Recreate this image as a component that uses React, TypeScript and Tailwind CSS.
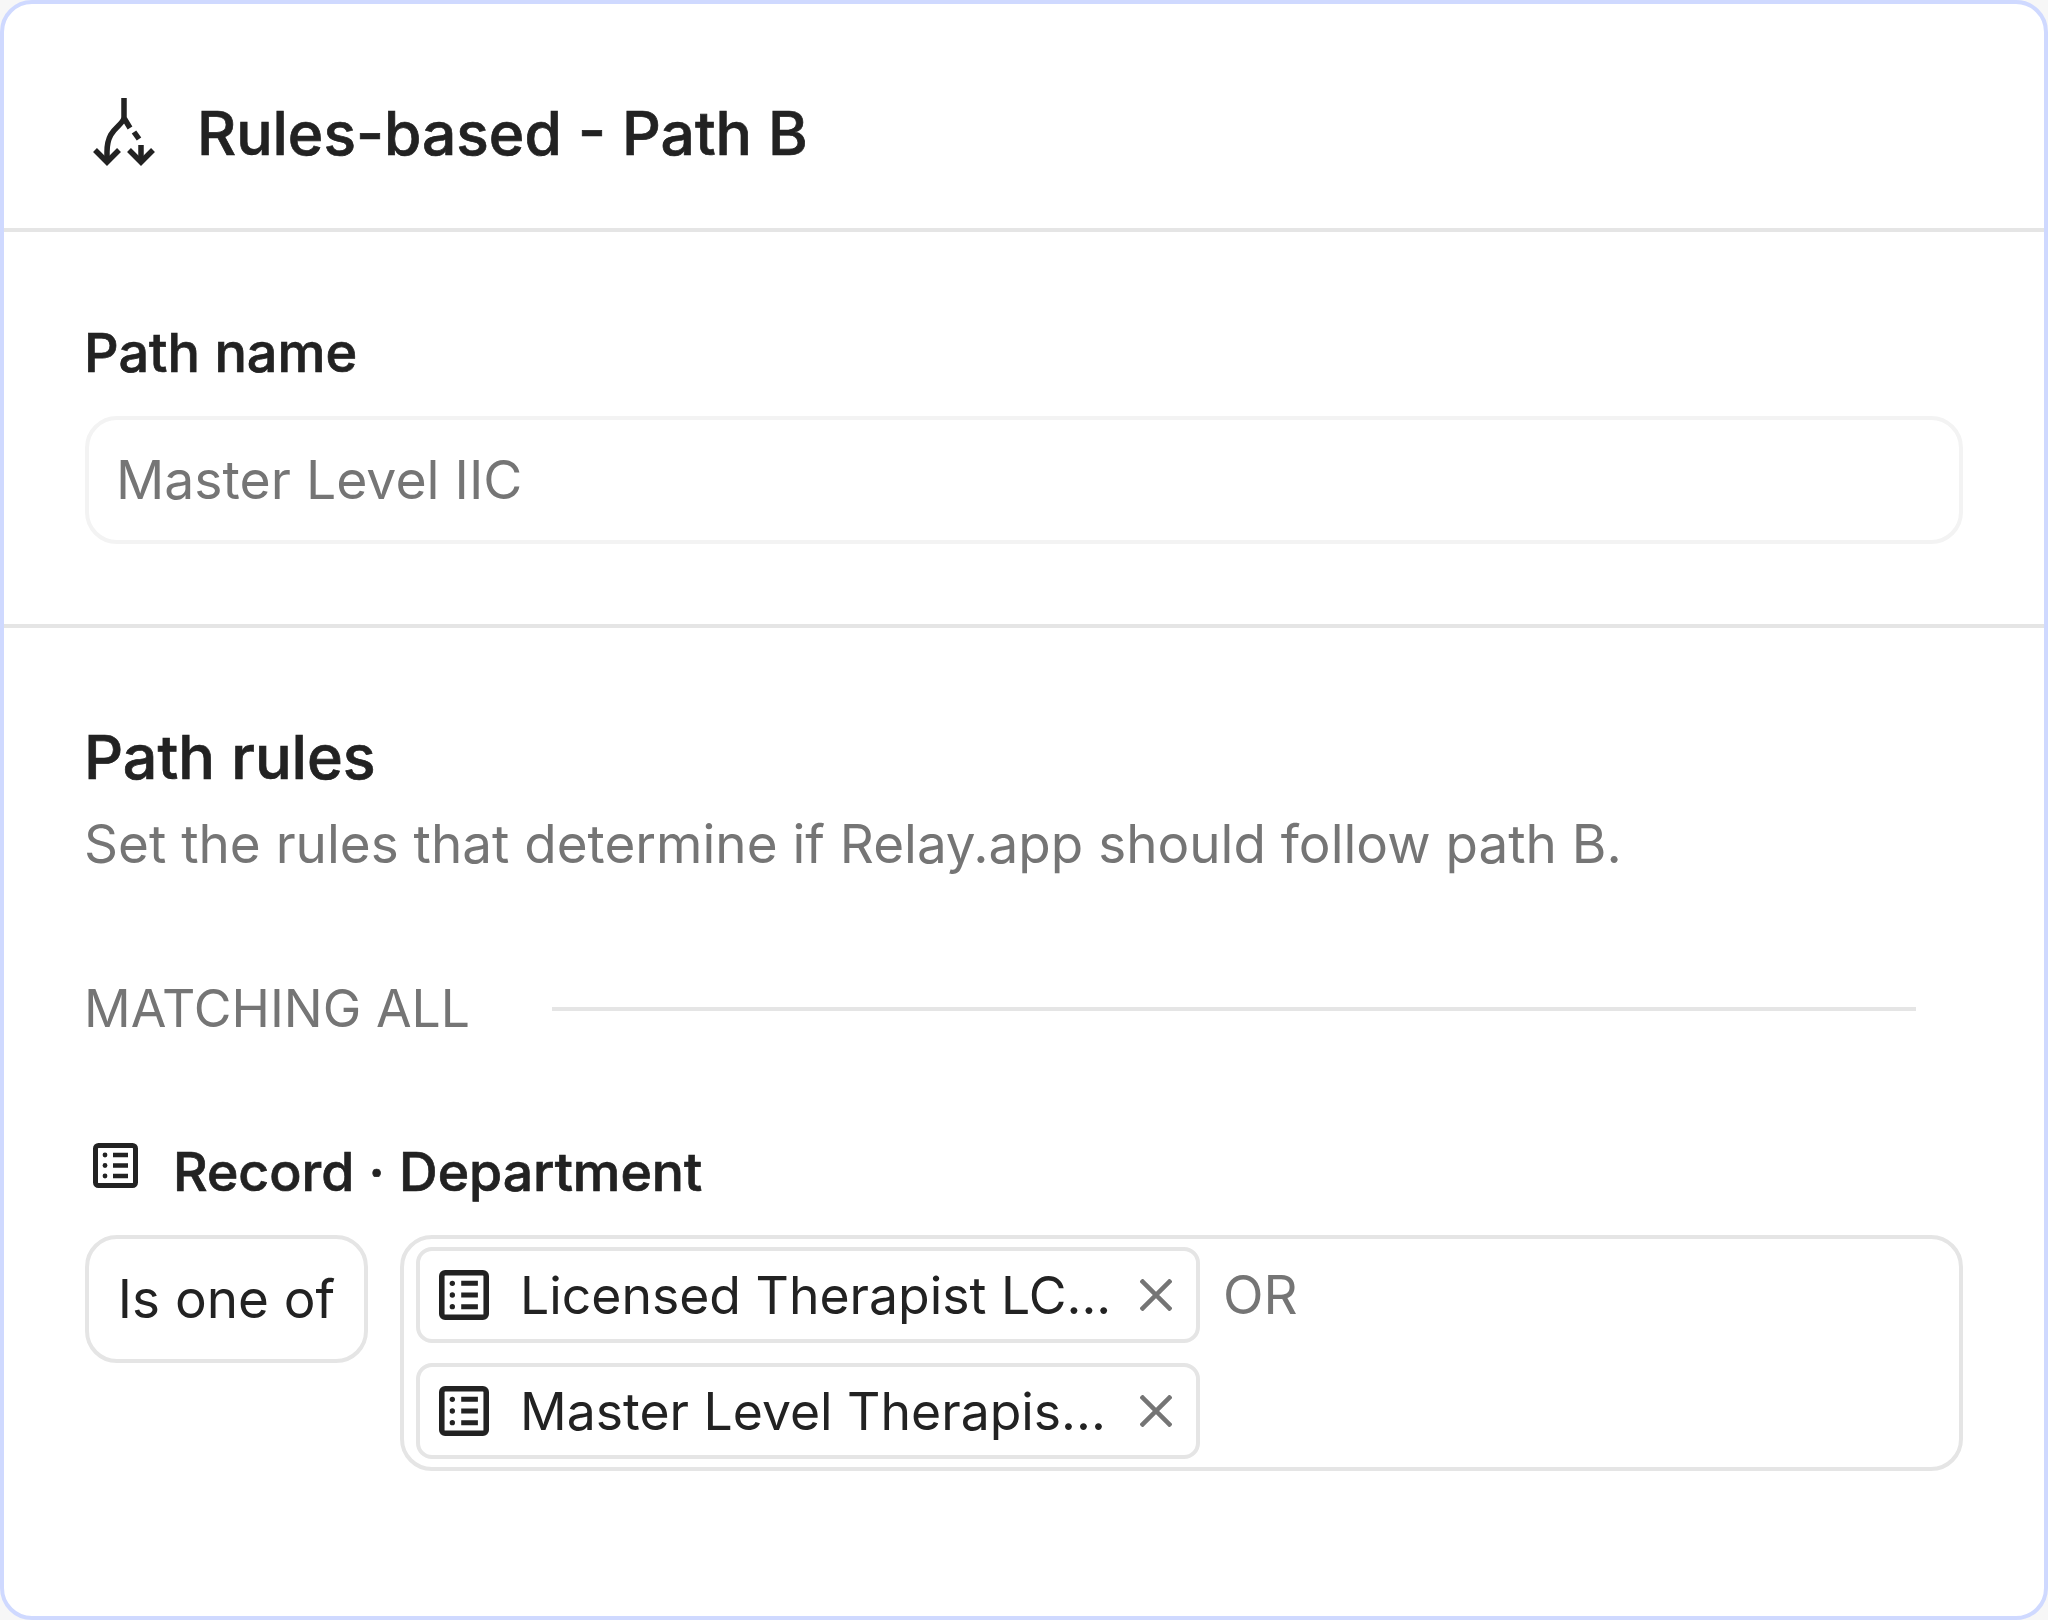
import React from 'react'

const font = "font-['Inter','Liberation_Sans',sans-serif]"
const heavy = 'font-medium text-[#222222] [-webkit-text-stroke:0.7px_#222222]'

const RecordIcon: React.FC<{ className?: string }> = ({ className }) => (
  <svg viewBox="0 0 45 45" className={className} fill="none" stroke="#222222">
    <rect x="2.5" y="2.5" width="40" height="40" rx="3" strokeWidth="5" />
    <path d="M20 12h15M20 22.5h15M20 33h15" strokeWidth="4.5" />
    <circle cx="12" cy="12" r="2.4" fill="#222222" stroke="none" />
    <circle cx="12" cy="22.5" r="2.4" fill="#222222" stroke="none" />
    <circle cx="12" cy="33" r="2.4" fill="#222222" stroke="none" />
  </svg>
)

const BranchIcon: React.FC = () => (
  <svg viewBox="0 0 68 70" className="w-[68px] h-[70px] shrink-0" fill="none" stroke="#222222" strokeWidth="5.5">
    <path d="M34 0v20L40 30" />
    <path d="M34 20c-2 9-17 10-17 34v10" />
    <path d="M5 52l12 12 12-12" />
    <path d="M44 34l5 7" />
    <path d="M51 47v17" />
    <path d="M39 52l12 12 12-12" />
  </svg>
)

const Chip: React.FC<{ label: string }> = ({ label }) => (
  <div className="flex items-center w-[784px] h-[96px] rounded-[16px] border-4 border-[#e5e5e5] pl-[19px]">
    <RecordIcon className="w-[50px] h-[50px] shrink-0" />
    <span className="ml-[31px] pt-[2px] text-[51.7px] text-[#222222] whitespace-nowrap">{label}</span>
    <svg viewBox="0 0 32 32" className="w-8 h-8 ml-auto mr-[24px]" stroke="#757575" strokeWidth="4.5" fill="none">
      <path d="M1 1l30 30M31 1L1 31" />
    </svg>
  </div>
)

export default function App() {
  return (
    <div className={`${font} w-[2048px] h-[1620px] bg-[#f7f7f7]`}>
      <div className="w-full h-full bg-white border-4 border-[#cfd9ff] rounded-[32px]">
        <div className="flex items-center h-[228px] pl-[86px] pt-[34px] border-b-4 border-[#e5e5e5]">
          <BranchIcon />
          <h1 className={`ml-[39px] text-[60.5px] ${heavy}`}>Rules-based - Path B</h1>
        </div>
        <div className="h-[396px] px-[81px] pt-[88px] border-b-4 border-[#e5e5e5]">
          <div className={`-ml-px text-[54px] leading-[65px] ${heavy}`}>Path name</div>
          <div className="mt-[31px] flex items-center h-[128px] rounded-[32px] border-4 border-[#f3f3f3] pl-[27px] text-[53.5px] text-[#757575]">
            Master Level IIC
          </div>
        </div>
        <div className="pl-[81px] pr-[81px] pt-[94px]">
          <div className={`-ml-px text-[61px] leading-[70px] ${heavy}`}>Path rules</div>
          <div className="-ml-px mt-[17px] text-[53px] leading-[70px] text-[#757575]">
            Set the rules that determine if Relay.app should follow path B.
          </div>
          <div className="mt-[95px] flex items-center pr-[47px]">
            <span className="-ml-px -translate-y-px text-[51.7px] leading-[70px] text-[#757575]">MATCHING ALL</span>
            <div className="ml-[82px] flex-1 h-1 bg-[#e5e5e5]" />
          </div>
          <div className="mt-[98px] flex items-start">
            <RecordIcon className="ml-[8px] mt-[1px] w-[45px] h-[45px] shrink-0" />
            <span className={`ml-[35px] text-[53.5px] leading-[60px] ${heavy}`}>Record · Department</span>
          </div>
          <div className="mt-[33px] flex items-start gap-[32px]">
            <div className="flex items-center justify-center w-[283px] h-[128px] pt-[2px] rounded-[32px] border-4 border-[#e5e5e5] text-[53px] text-[#222222]">
              Is one of
            </div>
            <div className="flex-1 h-[236px] rounded-[32px] border-4 border-[#e5e5e5] pl-[12px] pt-[8px] flex flex-col gap-[20px]">
              <div className="flex items-center">
                <Chip label="Licensed Therapist LC..." />
                <span className="ml-[23px] pt-[2px] text-[53px] text-[#757575]">OR</span>
              </div>
              <Chip label="Master Level Therapis..." />
            </div>
          </div>
        </div>
      </div>
    </div>
  )
}
